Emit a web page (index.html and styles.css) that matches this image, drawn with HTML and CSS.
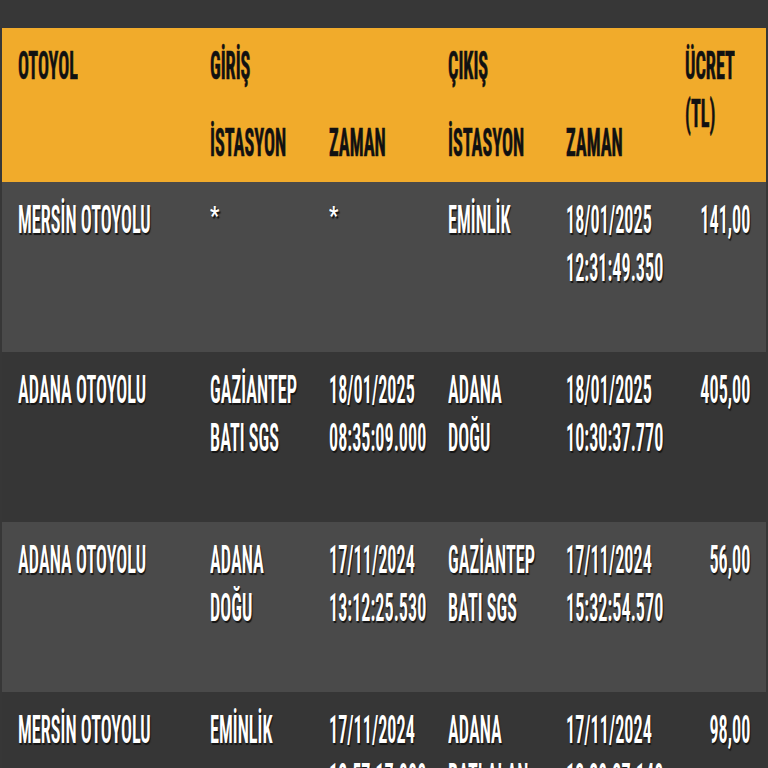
FILE: index.html
```html
<!DOCTYPE html>
<html lang="tr">
<head>
<meta charset="utf-8">
<link rel="stylesheet" href="styles.css">
</head>
<body>
<div class="topbar"></div>
<table class="tolls">
  <colgroup>
    <col class="c1"><col class="c2"><col class="c3"><col class="c4"><col class="c5"><col class="c6">
  </colgroup>
  <thead>
    <tr>
      <th rowspan="2"><span class="t">OTOYOL</span></th>
      <th colspan="2"><span class="t">GİRİŞ</span></th>
      <th colspan="2"><span class="t">ÇIKIŞ</span></th>
      <th rowspan="2"><span class="t">ÜCRET<br>(TL)</span></th>
    </tr>
    <tr>
      <th><span class="t">İSTASYON</span></th>
      <th><span class="t">ZAMAN</span></th>
      <th><span class="t">İSTASYON</span></th>
      <th><span class="t">ZAMAN</span></th>
    </tr>
  </thead>
  <tbody>
    <tr>
      <td><span class="t">MERSİN OTOYOLU</span></td>
      <td><span class="t ast">*</span></td>
      <td><span class="t ast">*</span></td>
      <td><span class="t">EMİNLİK</span></td>
      <td><span class="t">18/01/2025<br>12:31:49.350</span></td>
      <td><div class="num"><span class="t">141,00</span></div></td>
    </tr>
    <tr>
      <td><span class="t">ADANA OTOYOLU</span></td>
      <td><span class="t">GAZİANTEP<br>BATI SGS</span></td>
      <td><span class="t">18/01/2025<br>08:35:09.000</span></td>
      <td><span class="t">ADANA<br>DOĞU</span></td>
      <td><span class="t">18/01/2025<br>10:30:37.770</span></td>
      <td><div class="num"><span class="t">405,00</span></div></td>
    </tr>
    <tr>
      <td><span class="t">ADANA OTOYOLU</span></td>
      <td><span class="t">ADANA<br>DOĞU</span></td>
      <td><span class="t">17/11/2024<br>13:12:25.530</span></td>
      <td><span class="t">GAZİANTEP<br>BATI SGS</span></td>
      <td><span class="t">17/11/2024<br>15:32:54.570</span></td>
      <td><div class="num"><span class="t">56,00</span></div></td>
    </tr>
    <tr>
      <td><span class="t">MERSİN OTOYOLU</span></td>
      <td><span class="t">EMİNLİK</span></td>
      <td><span class="t">17/11/2024<br>12:57:17.000</span></td>
      <td><span class="t">ADANA<br>BATI ALAN</span></td>
      <td><span class="t">17/11/2024<br>13:39:27.140</span></td>
      <td><div class="num"><span class="t">98,00</span></div></td>
    </tr>
  </tbody>
</table>
</body>
</html>
```
FILE: styles.css
```css
html, body {
  margin: 0;
  padding: 0;
  background: #373737;
  overflow: hidden;
}
body {
  font-family: "Roboto Condensed", "Roboto", sans-serif;
}
.topbar {
  height: 28px;
}
.tolls {
  width: 764px;
  margin: 0 2px;
  border-collapse: collapse;
  table-layout: fixed;
}
.c1 { width: 192px; }
.c2 { width: 119px; }
.c3 { width: 119px; }
.c4 { width: 118px; }
.c5 { width: 119px; }
.c6 { width: 97px; }

.tolls th, .tolls td {
  padding: 14px 16px 15px 16px;
  text-align: left;
  vertical-align: top;
  font-size: 38px;
  line-height: 48px;
  white-space: nowrap;
}
.tolls thead {
  background: #f1ab2b;
}
.tolls th {
  color: #111;
  font-weight: 700;
  -webkit-text-stroke: 0.6px #111;
}
.tolls tbody tr {
  height: 170px;
}
.tolls tbody tr:nth-child(odd) {
  background: #4a4a4a;
}
.tolls tbody tr:nth-child(even) {
  background: #363636;
}
.tolls td {
  color: #fff;
  font-weight: 600;
  text-shadow: 2px 2px 1px #151515;
}
.t {
  display: inline-block;
  transform: scaleX(0.48);
  transform-origin: 0 0;
}
.t.ast {
  font-size: 26px;
  line-height: 34px;
  vertical-align: 8px;
  transform: scaleX(0.8);
}
.num {
  display: flex;
  justify-content: flex-end;
}
.num .t {
  flex: none;
  transform-origin: 100% 0;
}
```
